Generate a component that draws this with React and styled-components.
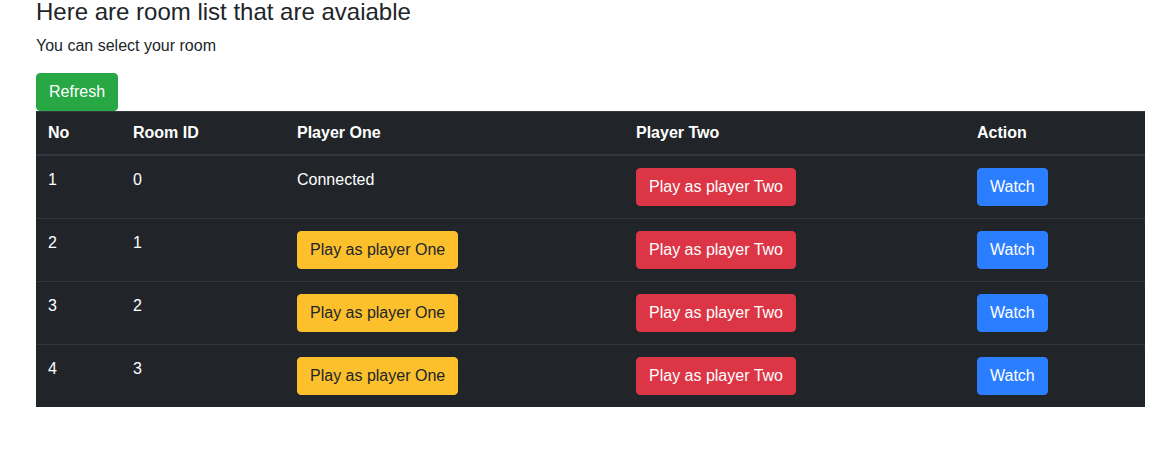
import React from 'react'
import styled, { createGlobalStyle } from 'styled-components'

const rooms = [
  { no: 1, id: 0, playerOne: 'Connected' },
  { no: 2, id: 1, playerOne: null },
  { no: 3, id: 2, playerOne: null },
  { no: 4, id: 3, playerOne: null },
]

const colors = {
  text: '#212529',
  dark: '#212529',
  border: '#32383e',
  success: '#28a745',
  danger: '#dc3545',
  warning: '#fcc02c',
  primary: '#2a7eff',
}

const GlobalStyle = createGlobalStyle`
  html, body {
    margin: 0;
    padding: 0;
    background: #ffffff;
  }
  body {
    font-family: "Liberation Sans", Arial, sans-serif;
    font-size: 16px;
    line-height: 1.5;
    color: ${colors.text};
  }
`

const App = () => {
  return (
    <Page>
      <GlobalStyle />
      <Title>Here are room list that are avaiable</Title>
      <Lead>You can select your room</Lead>
      <Button variant='success'>Refresh</Button>
      <Table>
        <colgroup>
          <col style={{ width: 85 }} />
          <col style={{ width: 164 }} />
          <col style={{ width: 339 }} />
          <col style={{ width: 341 }} />
          <col />
        </colgroup>
        <thead>
          <tr>
            <Th>No</Th>
            <Th>Room ID</Th>
            <Th>Player One</Th>
            <Th>Player Two</Th>
            <Th>Action</Th>
          </tr>
        </thead>
        <tbody>
          {rooms.map(room => (
            <tr key={room.no}>
              <Td>{room.no}</Td>
              <Td>{room.id}</Td>
              <Td>
                {room.playerOne
                  ? room.playerOne
                  : <Button variant='warning'>Play as player One</Button>}
              </Td>
              <Td>
                <Button variant='danger'>Play as player Two</Button>
              </Td>
              <Td>
                <Button variant='primary'>Watch</Button>
              </Td>
            </tr>
          ))}
        </tbody>
      </Table>
    </Page>
  )
}

export default App

const Page = styled.div`
  padding: 1px 7px 0 36px;
`

const Title = styled.h4`
  margin: 0 0 11px;
  font-size: 24px;
  font-weight: 500;
  line-height: 22px;
`

const Lead = styled.p`
  margin: 0 0 15px;
  font-size: 16px;
  line-height: 24px;
`

const variants = {
  success: { bg: colors.success, fg: '#ffffff' },
  danger: { bg: colors.danger, fg: '#ffffff' },
  warning: { bg: colors.warning, fg: colors.text },
  primary: { bg: colors.primary, fg: '#ffffff' },
}

const Button = styled.button`
  display: inline-block;
  box-sizing: border-box;
  height: 38px;
  padding: 6px 12px;
  font-family: inherit;
  font-size: 16px;
  line-height: 24px;
  font-weight: 400;
  border: 1px solid ${({ variant }) => variants[variant].bg};
  border-radius: 4px;
  background: ${({ variant }) => variants[variant].bg};
  color: ${({ variant }) => variants[variant].fg};
  cursor: pointer;
  vertical-align: middle;
`

const Table = styled.table`
  width: 100%;
  table-layout: fixed;
  border-collapse: collapse;
  background: ${colors.dark};
  color: #ffffff;
`

const Th = styled.th`
  padding: 12px;
  text-align: left;
  vertical-align: bottom;
  font-weight: 700;
  line-height: 18px;
  border-top: 1px solid ${colors.border};
  border-bottom: 2px solid ${colors.border};
`

const Td = styled.td`
  padding: 12px;
  height: 38px;
  text-align: left;
  vertical-align: top;
  line-height: 24px;
  border-top: 1px solid ${colors.border};
`
